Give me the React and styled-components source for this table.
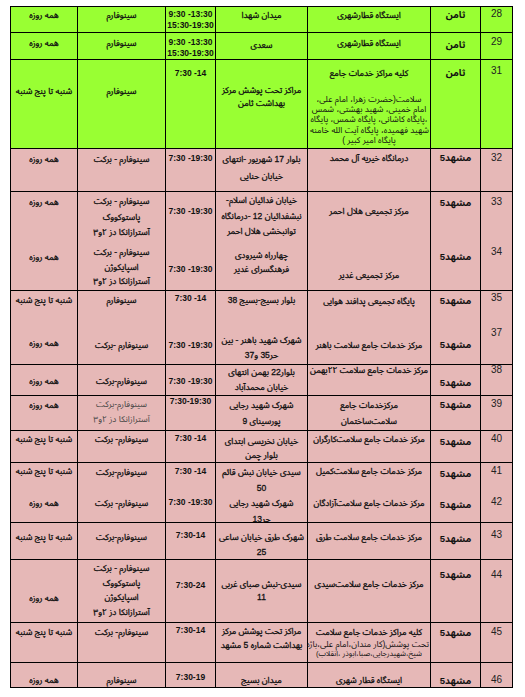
import React from "react";
import styled, { createGlobalStyle } from "styled-components";

const GlobalStyle = createGlobalStyle`
  html, body {
    margin: 0;
    padding: 0;
    background: #fff;
  }
  body {
    font-family: "Liberation Sans", "Noto Sans Arabic", "DejaVu Sans", sans-serif;
  }
`;

const GREEN = "#99ff33";
const PINK = "#e6b8b7";

// num, city, center, address, hours, vaccine, days (right to left)
const COLS = [32, 50, 123, 92, 50, 88, 67];

const Sheet = styled.div`
  direction: rtl;
  display: grid;
  grid-template-columns: ${COLS.map((w) => w + "px").join(" ")};
  grid-template-rows: ${(p) => p.$rows.map((h) => h + "px").join(" ")};
  width: 502px;
  margin: 6px 0 0 10px;
  border-top: 1px solid #000;
  border-right: 1px solid #000;
`;

const Cell = styled.div`
  box-sizing: border-box;
  min-width: 0;
  background: ${(p) => p.$bg};
  border-left: 1px solid #000;
  border-bottom: ${(p) => (p.$open ? "none" : "1px solid #000")};
  padding: ${(p) => p.$pt}px 1px 0;
  text-align: center;
  font-size: 8.5px;
  line-height: ${(p) => p.$lh}px;
  color: #111;
  white-space: nowrap;
`;

const NumCell = styled(Cell)`
  font-size: 10px;
  color: #222;
`;

const CityCell = styled(Cell)`
  font-size: 9.5px;
  font-weight: bold;
`;

const HoursCell = styled(Cell)`
  direction: ltr;
  font-size: 8.5px;
  font-weight: bold;
`;

const TextCell = styled(Cell)`
  -webkit-text-stroke: ${(p) => (p.$light ? "0" : "0.3px")};
  color: ${(p) => (p.$light ? "#444" : "#111")};
`;

const Line = styled.span`
  display: block;
  font-size: ${(p) => (p.$size === 2 ? "7.5px" : p.$size === 1 ? "8.5px" : "inherit")};
  -webkit-text-stroke: ${(p) => (p.$size ? "0" : "inherit")};
  line-height: ${(p) => (p.$lh ? p.$lh + "px" : "inherit")};
  margin-top: ${(p) => p.$mt || 0}px;
`;

const rows = [
  {
    h: 26, bg: GREEN,
    cells: [["28", 0], ["ثامن", 1], ["ایستگاه قطارشهری", 1], ["میدان شهدا", 1], [["9:30 -13:30", "15:30-19:30"], 2, 11], ["سینوفارم", 1], ["همه روزه", 1]],
  },
  {
    h: 27, bg: GREEN,
    cells: [["29", 2], ["ثامن", 5], ["ایستگاه قطارشهری", 3], ["سعدی", 5], [["9:30 -13:30", "15:30-19:30"], 4, 10.5], ["سینوفارم", 3], ["همه روزه", 3]],
  },
  {
    h: 89, bg: GREEN,
    cells: [
      ["31", 4],
      ["ثامن", 6],
      [[
        "کلیه مراکز خدمات جامع",
        { t: "سلامت(حضرت زهرا، امام علی،", s: 1, lh: 10.2, mt: 14 },
        { t: "امام خمینی، شهید بهشتی، شمس", s: 1, lh: 10.2 },
        { t: "،پایگاه کاشانی، پایگاه شمس، پایگاه", s: 1, lh: 10.2 },
        { t: "شهید فهمیده، پایگاه آیت الله خامنه ای،", s: 1, lh: 10.2 },
        { t: "پایگاه امیر کبیر )", s: 1, lh: 10.2 },
      ], 6],
      [["مراکز تحت پوشش مرکز", "بهداشت ثامن"], 24, 13],
      ["7:30 -14", 6],
      ["سینوفارم", 24],
      ["شنبه تا پنج شنبه", 24],
    ],
  },
  {
    h: 43, bg: PINK,
    cells: [["32", 2], ["مشهد5", 2], ["درمانگاه خیریه آل محمد", 2], [["بلوار 17 شهریور -انتهای", "خیابان حنایی"], 2, 17], ["7:30 -19:30", 2], ["سینوفارم - برکت", 3], ["همه روزه", 3]],
  },
  {
    h: 50, bg: PINK, open: true,
    cells: [
      ["33", 3], ["مشهد5", 4], ["مرکز تجمیعی هلال احمر", 12],
      [["خیابان فدائیان اسلام-", "نبشفدائیان 12 -درمانگاه", "توانبخشی هلال احمر"], 1, 15.5],
      ["7:30 -19:30", 12],
      [["سینوفارم - برکت", "پاستوکووک", "آسترازانکا دز ۲و۳"], 2, 15.5],
      ["همه روزه", 3],
    ],
  },
  {
    h: 49, bg: PINK,
    cells: [
      ["34", 3], ["مشهد5", 8], ["مرکز تجمیعی غدیر", 26],
      [["چهارراه شیرودی", "فرهنگسرای غدیر"], 6, 14],
      ["7:30 -19:30", 20],
      [["سینوفارم - برکت", "اسپایکوژن", "آسترازانکا دز ۲و۳"], 3, 14.5],
      ["همه روزه", 8],
    ],
  },
  {
    h: 21, bg: PINK, open: true,
    cells: [["35", 0], ["مشهد5", 3], ["پایگاه تجمیعی پدافند هوایی", 3], ["بلوار بسیج-بسیج 38", 2], ["7:30 -14", 0], ["سینوفارم", 2], ["شنبه تا پنج شنبه", 2]],
  },
  {
    h: 53, bg: PINK,
    cells: [
      ["37", 14], ["مشهد5", 26], ["مرکز خدمات جامع  سلامت باهنر", 26],
      [["شهرک شهید باهنر - بین", "حر35 و37"], 21, 14.7],
      ["7:30 -19:30", 26], ["سینوفارم -برکت", 26], ["همه روزه", 24],
    ],
  },
  {
    h: 31, bg: PINK,
    cells: [
      ["38", 0, 10], ["مشهد5", 11], ["مرکز خدمات جامع سلامت ۲۲بهمن", 0, 10],
      [["بلوار22 بهمن انتهای", "خیابان محمدآباد"], 0, 15],
      ["7:30 -19:30", 9], ["سینوفارم-برکت", 9], ["همه روزه", 9],
    ],
  },
  {
    h: 35, bg: PINK,
    cells: [
      ["39", 1], ["مشهد5", 2], [["مرکزخدمات جامع", "سلامت‌ساختمان"], 1, 16],
      [["شهرک شهید رجایی", "پورسینای 9"], 1, 16],
      ["7:30-19:30", 0, 10],
      [["سینوفارم-برکت", "آسترازانکا دز ۲و۳"], 1, 15, true],
      ["همه روزه", 2],
    ],
  },
  {
    h: 32, bg: PINK,
    cells: [
      ["40", 1], ["مشهد5", 4], ["مرکز خدمات جامع  سلامت‌کارگران", 1],
      [["خیابان نخریسی ابتدای", "بلوار چمن"], 4, 13.5],
      ["7:30 -14", 0], ["سینوفارم- برکت", 1], ["شنبه تا پنج شنبه", 1],
    ],
  },
  {
    h: 30, bg: PINK, open: true,
    cells: [
      ["41", 1], ["مشهد5", 4], ["مرکز خدمات جامع  سلامت‌کمیل", 1],
      [["سیدی خیابان نبش قائم", "50"], 1, 16],
      ["7:30 -14", 1], ["سینوفارم-برکت", 2], ["شنبه تا پنج شنبه", 1],
    ],
  },
  {
    h: 30, bg: PINK,
    cells: [
      ["42", 2], ["مشهد5", 5], ["مرکز خدمات جامع  سلامت‌آزادگان", 3],
      [["شهرک شهید رجایی", "حر13"], 2, 16],
      ["7:30 -19:30", 2], ["سینوفارم- برکت", 3], ["همه روزه", 3],
    ],
  },
  {
    h: 37, bg: PINK,
    cells: [
      ["43", 5], ["مشهد5", 9], ["مرکز خدمات جامع  سلامت طرق", 7],
      [["شهرک طرق خیابان ساعی", "25"], 7, 15],
      ["7:30-14", 7, 10], ["سینوفارم-برکت", 7], ["شنبه تا پنج شنبه", 7],
    ],
  },
  {
    h: 63, bg: PINK,
    cells: [
      ["44", 8], ["مشهد5", 8], ["مرکز خدمات  جامع سلامت‌سیدی", 17],
      [["سیدی-نبش صبای غربی", "11"], 18, 13.3],
      ["7:30-24", 20, 10],
      [["سینوفارم - برکت", "پاستوکووک", "اسپایکوژن", "آسترازانکا دز ۲و۳"], 1, 14.5],
      ["همه روزه", 31],
    ],
  },
  {
    h: 40, bg: PINK,
    cells: [
      ["45", 2], ["مشهد5", 3],
      [[
        "کلیه مراکز خدمات جامع سلامت",
        { t: "تحت پوشش(کار مندان،امام علی،باژه", s: 1, lh: 11 },
        { t: "شیخ،شهیدرجایی،صبا،ابوذر ،انقلاب)", s: 2, lh: 7 },
      ], 2],
      [["مراکز تحت پوشش مرکز", "بهداشت شماره 5 مشهد"], 2, 13.5],
      ["7:30-14", 2, 10], ["سینوفارم- برکت", 2], ["شنبه تا پنج شنبه", 2],
    ],
  },
  {
    h: 25, bg: PINK,
    cells: [["46", 10], ["مشهد5", 11], ["ایستگاه قطار شهری", 10], ["میدان بسیج", 10], ["7:30-19", 9, 10], ["سینوفارم", 10], ["همه روزه", 10]],
  },
];

const KINDS = [NumCell, CityCell, TextCell, TextCell, HoursCell, TextCell, TextCell];

const Content = ({ text }) => {
  if (!Array.isArray(text)) return text;
  return text.map((line, i) =>
    typeof line === "string" ? (
      <Line key={i}>{line}</Line>
    ) : (
      <Line key={i} $size={line.s} $lh={line.lh} $mt={line.mt}>
        {line.t}
      </Line>
    )
  );
};

export default function App() {
  return (
    <>
      <GlobalStyle />
      <Sheet $rows={rows.map((r) => r.h)}>
        {rows.map((row, r) =>
          row.cells.map(([text, pt, lh = 14, light], c) => {
            const Kind = KINDS[c];
            return (
              <Kind
                key={r + "-" + c}
                $bg={row.bg}
                $open={row.open}
                $pt={pt}
                $lh={lh}
                $light={light}
              >
                <Content text={text} />
              </Kind>
            );
          })
        )}
      </Sheet>
    </>
  );
}
